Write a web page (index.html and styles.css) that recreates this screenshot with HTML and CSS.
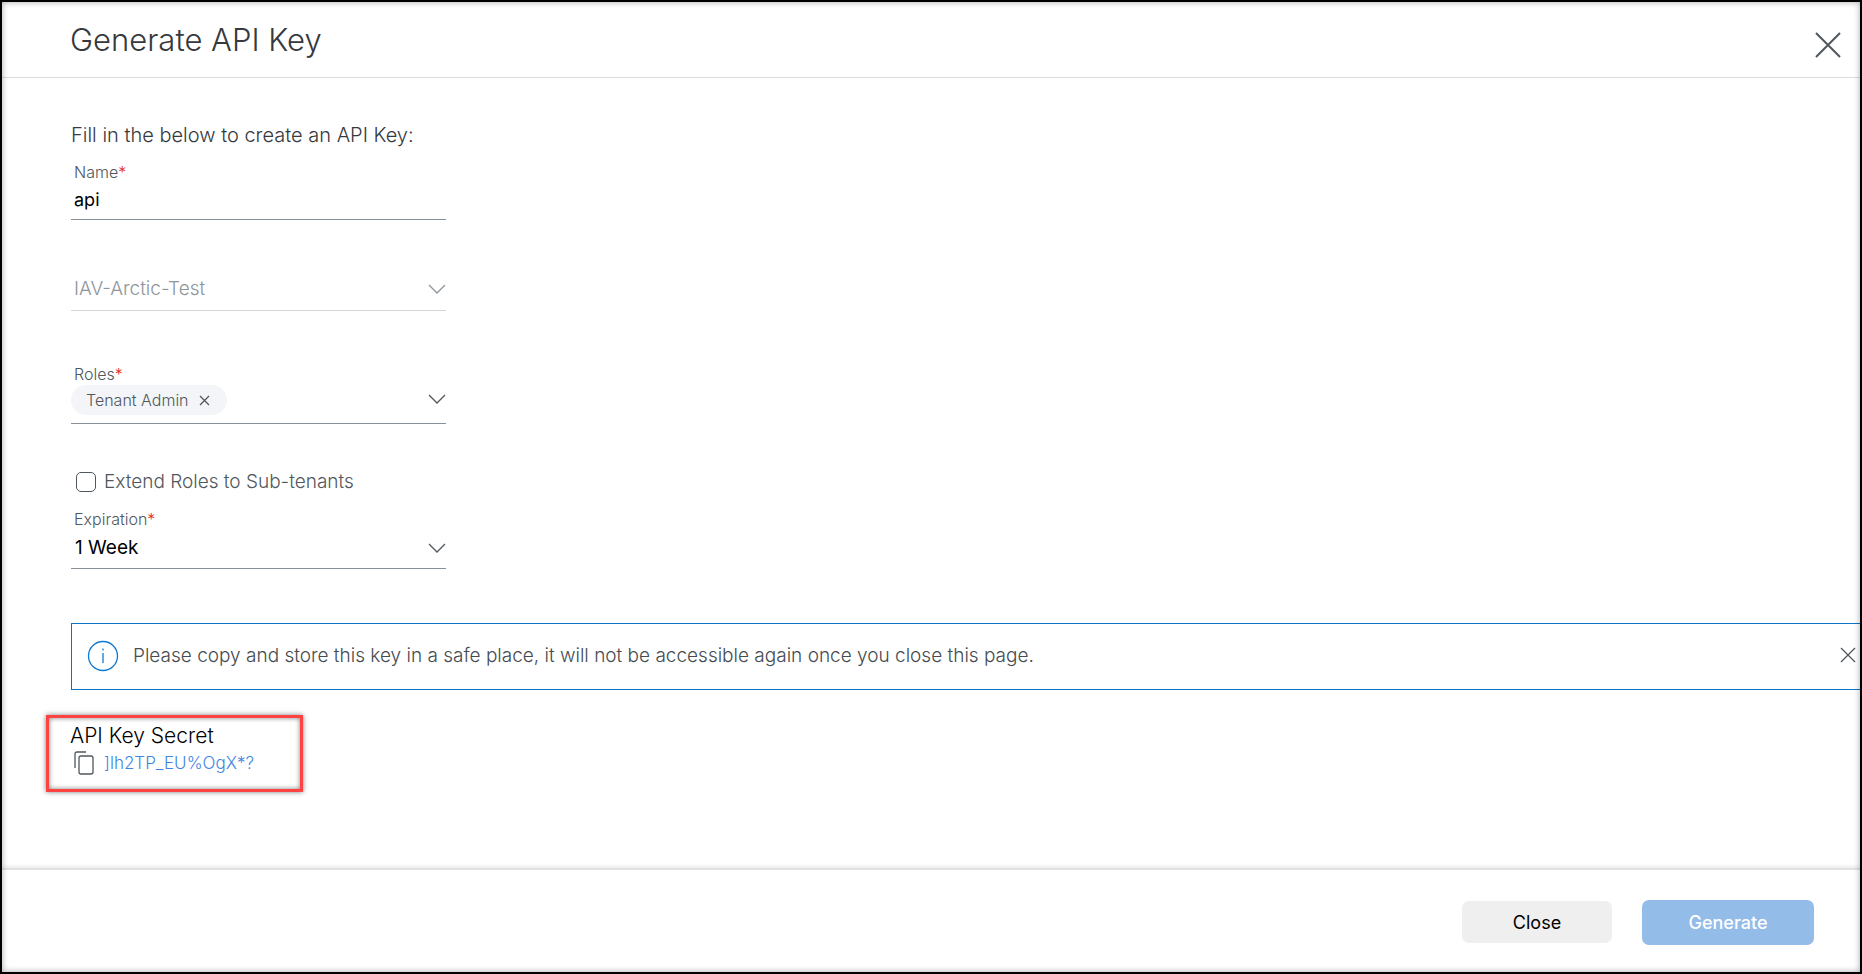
FILE: index.html
```
<!DOCTYPE html>
<html lang="en">
<head>
<meta charset="utf-8">
<title>Generate API Key</title>
<link rel="stylesheet" href="styles.css">
</head>
<body>
<div class="dialog">
  <header class="dialog-header">
    <h1 class="dialog-title">Generate API Key</h1>
    <button class="icon-button header-close" type="button" aria-label="Close dialog">
      <svg width="26" height="26" viewBox="0 0 26 26"><path d="M1 1L25 25M25 1L1 25"/></svg>
    </button>
  </header>

  <main class="dialog-body">
    <form class="form" id="key-form">
      <p class="intro">Fill in the below to create an API Key:</p>

      <div class="field">
        <label class="field-label" for="name">Name<span class="required">*</span></label>
        <input class="text-input" id="name" type="text" value="api">
      </div>

      <div class="field field-tenant">
        <div class="select-wrap">
          <select class="select" aria-label="Tenant" disabled><option>IAV-Arctic-Test</option></select>
          <svg class="chevron" width="18" height="12" viewBox="0 0 18 12"><path d="M1 2L9 10L17 2"/></svg>
        </div>
      </div>

      <div class="field field-roles">
        <span class="field-label" id="roles-label">Roles<span class="required">*</span></span>
        <div class="roles" role="group" aria-labelledby="roles-label">
          <span class="chip">Tenant Admin
            <button class="icon-button" type="button" aria-label="Remove Tenant Admin">
              <svg width="11" height="11" viewBox="0 0 11 11"><path d="M1 1L10 10M10 1L1 10"/></svg>
            </button>
          </span>
          <button class="icon-button" type="button" aria-label="Show roles">
            <svg width="18" height="12" viewBox="0 0 18 12"><path d="M1 1L9 9L17 1"/></svg>
          </button>
        </div>
      </div>

      <div class="check-row">
        <input class="checkbox" id="extend" type="checkbox">
        <label for="extend">Extend Roles to Sub-tenants</label>
      </div>

      <div class="field">
        <label class="field-label" for="expiration">Expiration<span class="required">*</span></label>
        <div class="select-wrap">
          <select class="select select-short" id="expiration"><option>1 Week</option></select>
          <svg class="chevron" width="18" height="12" viewBox="0 0 18 12"><path d="M1 1L9 9L17 1"/></svg>
        </div>
      </div>
    </form>

    <div class="notice" role="status">
      <svg class="notice-icon" width="32" height="32" viewBox="0 0 32 32"><circle cx="16" cy="16" r="14.5"/><path d="M16 13V23M16 8.5V10.5"/></svg>
      <p class="notice-text">Please copy and store this key in a safe place, it will not be accessible again once you close this page.</p>
      <button class="icon-button notice-close" type="button" aria-label="Dismiss notice">
        <svg width="16" height="16" viewBox="0 0 16 16"><path d="M1 1L15 15M15 1L1 15"/></svg>
      </button>
    </div>

    <section class="secret">
      <h2 class="secret-title">API Key Secret</h2>
      <div class="secret-row">
        <button class="icon-button copy-button" type="button" aria-label="Copy secret">
          <svg width="20" height="24" viewBox="0 0 20 24"><rect x="5" y="5" width="14" height="18" rx="2"/><path d="M1 17V3Q1 1 3 1H12"/></svg>
        </button>
        <span class="secret-value">]lh2TP_EU%OgX*?</span>
      </div>
    </section>
  </main>

  <footer class="dialog-footer">
    <button class="button button-close" type="button">Close</button>
    <button class="button button-primary" type="submit" form="key-form">Generate</button>
  </footer>
</div>
</body>
</html>
```
FILE: styles.css
```
* {
  box-sizing: border-box;
}

body {
  margin: 0;
  background: #fff;
  color: #36393d;
  font-family: Inter, "Liberation Sans", sans-serif;
  font-size: 19px;
  font-weight: 300;
}

h1, h2, p {
  margin: 0;
  font-weight: 300;
}

svg {
  display: block;
  flex: none;
  fill: none;
  stroke: #50575d;
  stroke-width: 1.3;
}

.dialog {
  position: relative;
  display: flex;
  flex-direction: column;
  min-height: 100vh;
  border: 2px solid #000;
}

.dialog::after {
  content: "";
  position: absolute;
  inset: 0;
  box-shadow: inset 0 0 6px rgba(0, 0, 0, 0.35);
  pointer-events: none;
}

.dialog-header {
  display: flex;
  align-items: center;
  justify-content: space-between;
  height: 76px;
  padding: 0 19px 0 68px;
  border-bottom: 1px solid #dcdcdc;
}

.dialog-title {
  font-size: 31px;
  line-height: 36px;
}

.icon-button {
  padding: 0;
  border: 0;
  background: none;
  cursor: pointer;
}

.header-close {
  padding-top: 10px;
}

.header-close svg {
  stroke-width: 2;
}

.dialog-body {
  flex: 1;
  padding: 45px 0 40px 69px;
}

.form {
  width: 375px;
}

.intro {
  margin-bottom: 15px;
  font-size: 20px;
  line-height: 24px;
  white-space: nowrap;
}

.field-label {
  display: block;
  padding-left: 3px;
  color: #50575d;
  font-size: 16px;
  line-height: 20px;
}

.required {
  color: #e2231a;
}

.text-input {
  display: block;
  width: 100%;
  height: 38px;
  padding: 0 3px 2px;
  border: 0;
  border-bottom: 1px solid #889099;
  background: none;
  color: #000;
  font: inherit;
  font-size: 18px;
  font-weight: 400;
}

.select-wrap {
  display: grid;
  align-items: center;
}

.select {
  grid-area: 1 / 1;
  width: 100%;
  height: 45px;
  padding: 0 3px;
  border: 0;
  border-bottom: 1px solid #889099;
  border-radius: 0;
  background: none;
  appearance: none;
  color: #000;
  font: inherit;
  font-weight: 400;
}

.select:disabled {
  border-color: #d5d6d8;
  color: #8e959c;
  font-weight: 300;
  opacity: 1;
}

.select:disabled + .chevron {
  stroke: #8e959c;
}

.select-short {
  height: 40px;
  padding: 0 4px 2px;
}

.chevron {
  grid-area: 1 / 1;
  justify-self: end;
  pointer-events: none;
}

.field-tenant {
  margin-top: 46px;
}

.field-roles {
  margin-top: 53px;
}

.roles {
  display: flex;
  align-items: center;
  justify-content: space-between;
  height: 40px;
  padding-bottom: 7px;
  border-bottom: 1px solid #889099;
}

.chip {
  display: flex;
  align-items: center;
  gap: 10px;
  height: 30px;
  padding: 0 17px 0 15px;
  border-radius: 15px;
  background: #f3f5f8;
  color: #50575d;
  font-size: 16px;
}

.check-row {
  display: flex;
  align-items: center;
  gap: 8px;
  margin: 46px 0 15px 5px;
  color: #50575d;
  line-height: 24px;
}

.checkbox {
  appearance: none;
  width: 20px;
  height: 20px;
  margin: 0;
  border: 1px solid #50575d;
  border-radius: 5px;
}

.checkbox:checked {
  background: #50575d;
}

.notice {
  display: flex;
  align-items: center;
  margin-top: 54px;
  padding: 16px 4px 17px 15px;
  border: 1px solid #0d73c5;
  border-right: 0;
}

.notice-icon {
  stroke: #0d7ad5;
}

.notice-text {
  flex: 1;
  padding-left: 14px;
  color: #454b50;
  line-height: 24px;
}

.notice-close {
  padding-bottom: 3px;
}

.secret {
  width: 257px;
  margin: 25px 0 0 -25px;
  padding: 4px 21px 12px;
  border: 3px solid #ff4242;
  box-shadow: 0 0 5px rgba(0, 0, 0, 0.5), inset 0 0 5px rgba(0, 0, 0, 0.5);
}

.secret-title {
  color: #000;
  font-size: 21px;
  line-height: 27px;
}

.secret-row {
  display: flex;
  align-items: center;
  gap: 10px;
  padding-left: 4px;
  line-height: 28px;
}

.secret-value {
  color: #4285e0;
  font-size: 17px;
}

.dialog-footer {
  display: flex;
  align-items: center;
  justify-content: flex-end;
  gap: 30px;
  height: 104px;
  padding: 2px 46px 0 0;
  border-top: 2px solid #e2e2e2;
  box-shadow: 0 -2px 4px rgba(0, 0, 0, 0.08);
}

.button {
  border: 0;
  border-radius: 7px;
  font: inherit;
  font-size: 18px;
  font-weight: 400;
  cursor: pointer;
}

.button-close {
  width: 150px;
  height: 42px;
  background: #efefef;
  color: #000;
}

.button-primary {
  width: 172px;
  height: 45px;
  background: #93bce9;
  color: #fff;
  font-weight: 500;
}
```
